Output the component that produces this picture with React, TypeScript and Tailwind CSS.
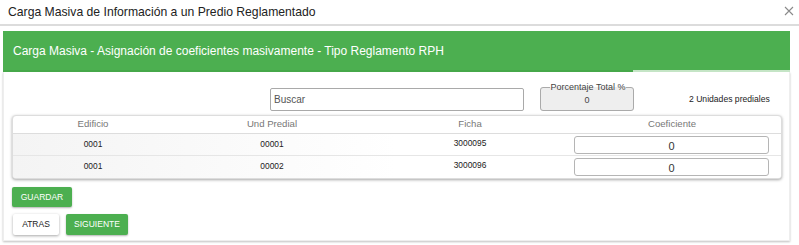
import React from "react";

const rows = [
  { edificio: "0001", und: "00001", ficha: "3000095", coef: "0" },
  { edificio: "0001", und: "00002", ficha: "3000096", coef: "0" },
];

export default function App() {
  return (
    <div className="h-[245px] w-[799px] overflow-hidden bg-white font-['Liberation_Sans',Arial,sans-serif] text-[#333]">
      {/* modal title */}
      <div className="flex h-[26px] items-center justify-between border-b-2 border-[#dcdcdc] pl-[8px] pr-[5px]">
        <span className="text-[12.2px] leading-none text-[#222]">Carga Masiva de Información a un Predio Reglamentado</span>
        <svg width="10" height="10" viewBox="0 0 10 10" className="mb-[3px]">
          <path d="M1 1 L9 9 M9 1 L1 9" stroke="#8a8a8a" strokeWidth="1.1" />
        </svg>
      </div>

      <div className="pl-[3px] pr-[9px] pt-[5px]">
        {/* green step header */}
        <div className="flex h-[41px] flex-col bg-[#4caf50]">
          <div className="flex flex-1 items-center pl-[10px] text-[12px] text-white">
            Carga Masiva - Asignación de coeficientes masivamente - Tipo Reglamento RPH
          </div>
          <div className="flex h-[2px]">
            <div className="flex-1 bg-[#46a84a]" />
            <div className="w-[157px] bg-[#c5e5c6]" />
          </div>
        </div>

        {/* panel */}
        <div className="h-[169px] border border-t-0 border-[#eeeeee] shadow-[0_1px_2px_rgba(0,0,0,0.25)]">
          <div className="flex items-end pt-[11px]">
            <div className="ml-[266px] flex h-[23px] w-[254px] items-center rounded-[2px] border border-[#a9a9a9] px-[3px] text-[10px] text-[#555]">
              Buscar
            </div>
            <fieldset className="ml-[16px] h-[28px] w-[94px] rounded-[3px] border border-[#aaa] bg-[#eeeeee] px-[4px] text-center">
              <legend className="ml-[1px] whitespace-nowrap px-[1px] text-[9px] leading-[9px] text-[#444]">Porcentaje Total %</legend>
              <div className="mt-[3px] text-[9px] leading-[10px] text-[#444]">0</div>
            </fieldset>
            <div className="mb-[5px] ml-[55px] whitespace-nowrap text-[8.6px] text-[#222]">2 Unidades prediales</div>
          </div>

          {/* table card */}
          <div className="ml-[8px] mr-[7px] mt-[4px] overflow-hidden rounded-[4px] border border-[#ddd] bg-white shadow-[0_1px_3px_rgba(0,0,0,0.35)]">
            <div className="grid h-[18px] grid-cols-[160px_198px_198px_1fr] items-center border-b border-[#ddd] text-center text-[9.6px] text-[#777] shadow-[0_1px_2px_rgba(0,0,0,0.12)]">
              <div>Edificio</div>
              <div>Und Predial</div>
              <div>Ficha</div>
              <div className="pr-[6px]">Coeficiente</div>
            </div>
            {rows.map((r, i) => (
              <div
                key={i}
                className={`grid h-[22px] grid-cols-[160px_198px_198px_1fr] bg-gradient-to-r from-[#f4f4f4] via-white to-white text-[8.4px] text-[#222] ${i === 0 ? "border-b border-[#e6e6e6]" : ""}`}
              >
                <div className="pt-[4px] text-center">{r.edificio}</div>
                <div className="pt-[4px] text-center">{r.und}</div>
                <div className="pt-[3px] text-center">{r.ficha}</div>
                <div className="flex items-center pl-[5px] pr-[12px]">
                  <div className="flex h-[18px] w-full items-center justify-center rounded-[3px] border border-[#b5b5b5] pt-[3px] text-[11px] text-[#333]">
                    {r.coef}
                  </div>
                </div>
              </div>
            ))}
          </div>

          {/* actions */}
          <div className="ml-[8px] mt-[8px] flex flex-col gap-[7px]">
            <button className="h-[20px] w-[60px] rounded-[2px] bg-[#4caf50] text-[8.5px] text-white shadow-[0_1px_2px_rgba(0,0,0,0.3)]">
              GUARDAR
            </button>
            <div className="flex gap-[7px]">
              <button className="ml-[1px] h-[21px] w-[46px] rounded-[2px] bg-white text-[8.5px] text-[#222] shadow-[0_1px_3px_rgba(0,0,0,0.35)]">
                ATRAS
              </button>
              <button className="h-[21px] w-[62px] rounded-[2px] bg-[#4caf50] text-[8.5px] text-white shadow-[0_1px_2px_rgba(0,0,0,0.3)]">
                SIGUIENTE
              </button>
            </div>
          </div>
        </div>
      </div>
    </div>
  );
}
